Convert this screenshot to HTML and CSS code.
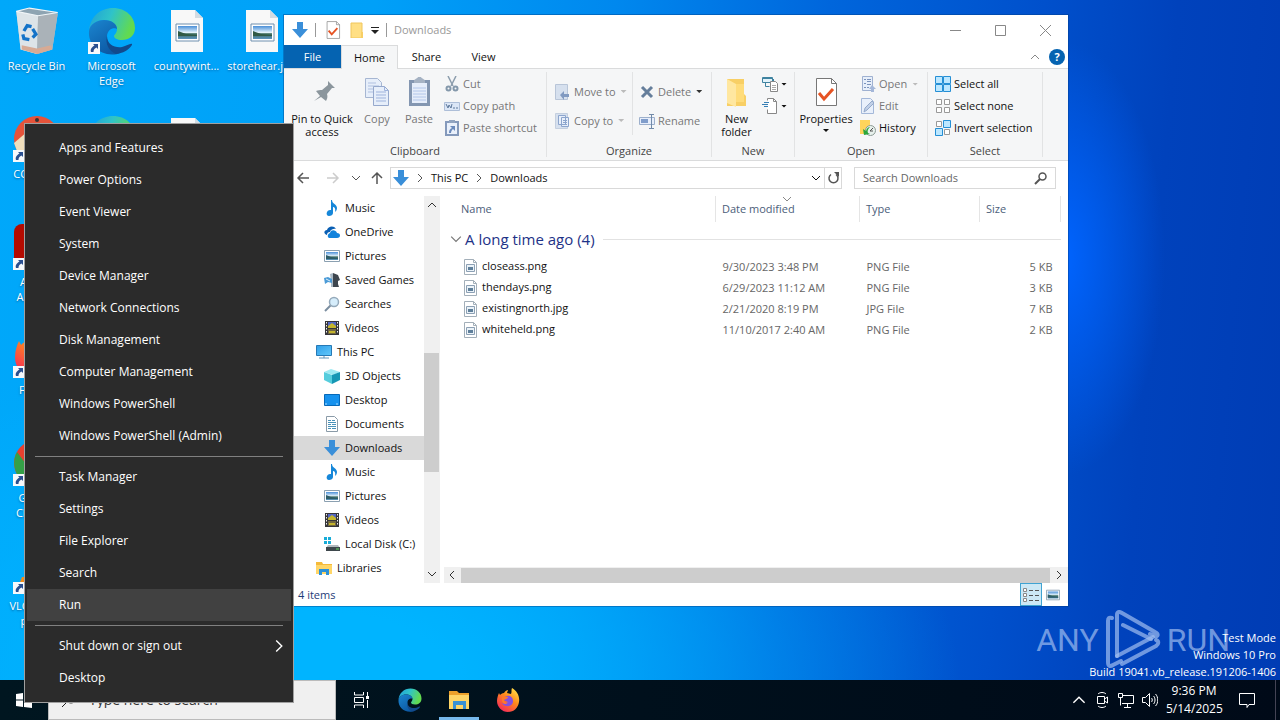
FILE: index.html
```html
<!DOCTYPE html>
<html lang="en">
<head>
  <meta charset="UTF-8" />
  <meta name="viewport" content="width=device-width, initial-scale=1.0"/>
  <title>Downloads</title>
  <link rel="stylesheet" href="styles.css">
</head>
<body>

<!-- Shared icons -->
<svg class="sprite" aria-hidden="true">
  <defs>
    <linearGradient id="edgeGreen" x1="0" y1="0" x2="1" y2="0.3"><stop offset="0" stop-color="#1f9fd8"/><stop offset="0.5" stop-color="#2fc3c9"/><stop offset="1" stop-color="#62da50"/></linearGradient>
    <linearGradient id="edgeBlue" x1="0" y1="0" x2="0.6" y2="1"><stop offset="0" stop-color="#1b86d0"/><stop offset="1" stop-color="#0c59a4"/></linearGradient>
    <linearGradient id="fox" x1="0.9" y1="0" x2="0.2" y2="1"><stop offset="0" stop-color="#ffe94a"/><stop offset="0.45" stop-color="#ff8a1c"/><stop offset="1" stop-color="#f5235e"/></linearGradient>
    <linearGradient id="sky" x1="0" y1="0" x2="0" y2="1"><stop offset="0" stop-color="#4a8fd8"/><stop offset="0.5" stop-color="#e3f2fb"/><stop offset="0.6" stop-color="#3b6b5a"/><stop offset="1" stop-color="#5b93c0"/></linearGradient>
    <linearGradient id="screen" x1="0" y1="0" x2="1" y2="1"><stop offset="0" stop-color="#2f9fe8"/><stop offset="1" stop-color="#62c8fb"/></linearGradient>
  </defs>

  <symbol id="down" viewBox="0 0 16 16"><path d="M5 0h6v7h5l-8 9-8-9h5z" fill="#3a8fd9"/></symbol>
  <symbol id="edge" viewBox="0 0 48 48">
    <path d="M1 24C2 10 12 1 25 1c13 0 22 9 22 20 0 8-6 12-13 12-5 0-8-2-8-4 0-1 3-3 3-7 0-5-6-9-13-9C8 13 2 18 1 24z" fill="url(#edgeGreen)"/>
    <path d="M1 24c1-7 8-11 15-11 8 0 13 4 13 9-2-2-10-1-10 8 0 7 5 14 13 16-2 1-5 1.500-8 1.500C10 47 0 37 1 24z" fill="url(#edgeBlue)"/>
    <path d="M19 29c0 9 8 12 15 11 5-1 8-4 10-3 1 1-5 9-16 10-7-3-11-10-9-18z" fill="#124a8c"/>
  </symbol>
  <symbol id="firefox" viewBox="0 0 24 24">
    <path d="M3 5l1 2c1-1 2-2 4-2 1-2 3-3 4-3l-1 3 4 1c1-2 0-4 1-6 5 3 8 8 7 14-1 6-5 10-11 10S1 19 1 13c0-3 1-6 2-8z" fill="url(#fox)"/>
    <path d="M8 10c3-4 9-2 9 3 0 6-8 7-11 2 2 1 4 0 5-2-3 0-4-2-3-3z" fill="#8350e0"/>
    <path d="M7 8l5 1c0 2-3 2-4 3 0 2 2 3 4 2-1 2-3 3-5 1-1-2-2-5 0-7z" fill="#ff7a2a"/>
  </symbol>
  <symbol id="picfile" viewBox="0 0 32 42">
    <path d="M0 0h24l8 8v34H0z" fill="#f8f8f8"/><path d="M24 0v8h8z" fill="#d2dbe2"/>
    <path d="M5 14h23v17H5z" fill="#fff" stroke="#6f8fae"/><path d="M7 16h19v13H7z" fill="url(#sky)"/><path d="M7 21l8 3 11 1v1H7z" fill="#315a46"/>
  </symbol>
  <symbol id="bin" viewBox="0 0 40 44">
    <path d="M1 4l38 2-5 33-14 4-15-4z" fill="#b9c5cc"/><path d="M1 4l20 4-1 35-15-4z" fill="#dde4e8"/><path d="M21 8l18-2-5 33-14 4z" fill="#aab2b8"/>
    <path d="M1 4l12-3 26 4-18 3z" fill="#8ea4b2" stroke="#f0f5f8"/><path d="M6 35l14 3 13-3 1 4-14 4-14-4z" fill="#d7aa94"/>
    <path d="M8 22l3-5 4 1M16 20l3 5-3 3M13 30l-5-1-1-4" fill="none" stroke="#1473c8" stroke-width="3"/>
  </symbol>
  <symbol id="shortcut" viewBox="0 0 12 12"><path d="M0 0h12v12H0z" fill="#f7f9fb"/><path d="M5 2h5v5L8.500 5.500C6 7 5.500 8 5.500 10H3C2 7 4 5 6.500 3.500z" fill="#2a4f8f"/></symbol>
  <symbol id="ccleaner" viewBox="0 0 48 48"><circle cx="24" cy="24" r="23" fill="#e5533a"/><circle cx="24" cy="24" r="12" fill="#f6f1e3"/><path d="M1 28l14-12 6 20H4z" fill="#f0dfbd"/><circle cx="24" cy="5" r="2" fill="#333"/></symbol>
  <symbol id="acrobat" viewBox="0 0 48 48"><rect x="1" y="1" width="46" height="46" rx="8" fill="#b30b00"/><path d="M12 35c8-4 14-16 11-23 2 12 8 18 14 18-8-1-17 0-25 5z" fill="none" stroke="#fff" stroke-width="3"/></symbol>
  <symbol id="chrome" viewBox="0 0 48 48"><circle cx="24" cy="24" r="23" fill="#e8402f"/><path d="M4 13a23 23 0 0 0 20 34l8-18H16z" fill="#34a047"/><path d="M47 20a23 23 0 0 1-23 27l10-24-6-8h18z" fill="#fbc116"/><circle cx="24" cy="24" r="10" fill="#4285f4" stroke="#fff" stroke-width="2"/></symbol>
  <symbol id="vlc" viewBox="0 0 48 48"><path d="M9 30h30l6 16H3z" fill="#f48b16"/><path d="M21 3h6l9 34H12z" fill="#f6f6f6"/><path d="M19 10h10l2 8H17zM15 25h18l2 8H13z" fill="#f48b16"/></symbol>

  <symbol id="music" viewBox="0 0 16 16"><path d="M8 0c0 4 5 4 5 8 0 2-1 3-2 4 1-4-1-5-2-5v6c0 2-2 3-4 3S2 14 3 12s3-2 4-2V0z" fill="#1687d9"/></symbol>
  <symbol id="onedrive" viewBox="0 0 16 16"><path d="M3 11C-1 10 0 6 3 6c1-4 7-5 9-1-4-1-6 2-6 3-2 0-3 1-3 3z" fill="#0a5fb4"/><path d="M6 14c-3 0-3-4 0-5 1-4 6-3 7 0 4 0 4 5 0 5z" fill="#1383dc"/></symbol>
  <symbol id="picture" viewBox="0 0 16 16"><path d="M.5 2.500h15v11H.5z" fill="#fff" stroke="#8ba0b1"/><path d="M2 4h12v8H2z" fill="url(#sky)"/><path d="M2 7l5 2 7 1v1H2z" fill="#2d5d69"/></symbol>
  <symbol id="games" viewBox="0 0 16 16"><path d="M9 1l5 2 2 5-2 1v3l1 3H8l1-6z" fill="#3e464e"/><path d="M6 2l3-1v14H7V9z" fill="#a9b8c4"/><path d="M0 6l4-1 4 2v4l-4-1-3 2z" fill="#4b9bd7"/><path d="M2 7l4 2" stroke="#dff1fc"/></symbol>
  <symbol id="search" viewBox="0 0 16 16"><path d="M1 15l6-6" stroke="#7b8ea0" stroke-width="2"/><circle cx="10" cy="6" r="4.500" fill="#d6edfb" stroke="#94a9ba" stroke-width="1.500"/></symbol>
  <symbol id="video" viewBox="0 0 16 16"><path d="M1 1h14v14H1z" fill="#36363a"/><path d="M4 2h8v6H4z" fill="#5367c4"/><path d="M4 9h8v5H4z" fill="#736841"/><path d="M4 6l4-3 4 3v2H4zM5 11h6v2H5z" fill="#c4b52d"/><path d="M2.500 2v12M13.500 2v12" stroke="#eee" stroke-dasharray="1.500 1.500"/></symbol>
  <symbol id="pc" viewBox="0 0 16 16"><path d="M.5 1.500h15v10H.5z" fill="url(#screen)" stroke="#2679b5"/><path d="M3 14h10M8 12v2" stroke="#6596ba"/></symbol>
  <symbol id="cube" viewBox="0 0 16 16"><path d="M0 4l7-3 9 3-7 3z" fill="#9eeaf2"/><path d="M0 4l8 3v9l-8-4z" fill="#55cddd"/><path d="M8 7l8-3v8l-8 4z" fill="#1697b4"/></symbol>
  <symbol id="desktop" viewBox="0 0 16 16"><path d="M.5 2.500h15v11H.5z" fill="#1692ee" stroke="#0769b8"/><path d="M1 12h14" stroke="#a6dbff" stroke-dasharray="2 9"/></symbol>
  <symbol id="document" viewBox="0 0 16 16"><path d="M2.500.5h8l3 3v12h-11z" fill="#fff" stroke="#8a9ba8"/><path d="M4 4.500h3M8 4.500h3M4 6.500h8M4 8.500h3M8 8.500h4M4 10.500h8M4 12.500h3M8 12.500h4" stroke="#4a92b9"/></symbol>
  <symbol id="disk" viewBox="0 0 16 16"><path d="M0 1h3v3H0zM4 1h3v3H4zM0 5h3v3H0zM4 5h3v3H4z" fill="#17acd8"/><path d="M4 9h10l2 3H2z" fill="#b2b9bd"/><path d="M2 11h14v4H2z" fill="#3e474c"/><path d="M12 13h3" stroke="#61e05d"/></symbol>
  <symbol id="library" viewBox="0 0 16 16"><path d="M0 2h6l1 2h9v10H0z" fill="#f5ba3a"/><path d="M0 5h16v9H0z" fill="#ffd668"/><path d="M3 15V9h10v6h-3v-3H6v3z" fill="#2c91d8"/></symbol>
  <symbol id="imgsmall" viewBox="0 0 13 16"><path d="M.5.500h9l3 3v12H.5z" fill="#fff" stroke="#a3afb9"/><path d="M9.500.500v3h3" fill="none" stroke="#a3afb9"/><path d="M2.500 5.500h8v7h-8z" fill="#eaf2f8" stroke="#8ca0b4"/><path d="M4 8h5v3H4z" fill="#5f7f9a"/></symbol>

  <symbol id="pin" viewBox="0 0 32 32"><path d="M8 25l6-5-4-5c2-1 4-1 6-1l6-5V5l7 7h-3l-5 6c1 3 0 5-1 7l-5-4z" fill="#8b969d"/></symbol>
  <symbol id="copy" viewBox="0 0 32 32"><path d="M4.500 2.500h12l4 4v15h-16z" fill="#e6eefa" stroke="#a6b6d2"/><path d="M7 7h8M7 10h11M7 13h11M7 16h11" stroke="#afc0e0"/><path d="M12.500 10.500h11l4 4v15h-15z" fill="#e6eefa" stroke="#96a9cd"/><path d="M23.500 10.500v4h4M15 16h10M15 19h10M15 22h10M15 25h10" fill="none" stroke="#9eb3dc"/></symbol>
  <symbol id="paste" viewBox="0 0 32 32"><path d="M6 4h21v26H6z" fill="#8396b1"/><path d="M9 7h15v20H9z" fill="#e5edfa"/><path d="M11 5c0-2 3-2 4-4h3c1 2 4 2 4 4v2H11z" fill="#a5b2c3"/><path d="M10 12h13M10 15h13M10 18h13M10 21h13M10 24h13" stroke="#b2c6ea"/></symbol>
  <symbol id="cut" viewBox="0 0 16 16"><path d="M4 0l5 10M12 0l-5 10" stroke="#8c9dad" stroke-width="1.500"/><circle cx="4.500" cy="12.500" r="2" fill="none" stroke="#8498ab" stroke-width="2"/><circle cx="11.500" cy="12.500" r="2" fill="none" stroke="#8498ab" stroke-width="2"/></symbol>
  <symbol id="path" viewBox="0 0 16 16"><path d="M.5 4.500h15v8H.5z" fill="#dbe6f6" stroke="#adbed8"/><path d="M2 6l2 4 1-3 2 3 1-4M9 10h2M12 10h2" fill="none" stroke="#5d789b"/></symbol>
  <symbol id="pasteshort" viewBox="0 0 16 16"><path d="M2 2h12v13H2z" fill="#e9f0fb" stroke="#8499bb" stroke-width="2"/><path d="M5 0h6v3H5z" fill="#91a4c0"/><path d="M5 13c0-3 1-4 3-5L6 6h5v5L9 9c-1 1-2 2-2 4z" fill="#6a8abc"/></symbol>
  <symbol id="moveto" viewBox="0 0 16 16"><path d="M.5.500h12v15H.5z" fill="#d6e0ee" stroke="#b8c5d8"/><path d="M5 11l4-4v3h5v3H9v3z" fill="#819ac1"/></symbol>
  <symbol id="copyto" viewBox="0 0 16 16"><path d="M.5.500h12v15H.5z" fill="#d6e0ee" stroke="#c4cfdf"/><path d="M3.500 2.500h7v9h-7zM6.500 4.500h7v9h-7z" fill="#e8effa" stroke="#8ca5cd"/><path d="M8 7.500h4M8 9.500h4M8 11.500h4" stroke="#8ca5cd"/></symbol>
  <symbol id="delete" viewBox="0 0 16 16"><path d="M3 3l10 10M13 3L3 13" stroke="#657e9b" stroke-width="3"/></symbol>
  <symbol id="rename" viewBox="0 0 16 16"><path d="M.5 4.500h15v7H.5z" fill="#e7eefb" stroke="#9db0cc"/><path d="M2 6h7v4H2z" fill="#809dcb"/><path d="M10 1.500h5M10 15.500h5M12.500 2v13" stroke="#718aa9"/></symbol>
  <symbol id="folder" viewBox="0 0 32 32"><path d="M6 3h17v15l2 2v10H6z" fill="#f8cf65"/><path d="M6 3l9 5v23l-9-4z" fill="#ffe7a0"/><path d="M15 8h8v18h-8z" fill="#ffdc7a"/></symbol>
  <symbol id="newitem" viewBox="0 0 16 16"><path d="M.5 1.500h10v5H.5z" fill="#e3f3fb" stroke="#3f83a0"/><path d="M1 2.500h10M3.500 6v4.500h4M11.500 3v3" fill="none" stroke="#3f83a0"/><path d="M8.500 5.500h5l2 2v8h-7z" fill="#fff" stroke="#888"/><path d="M10 9.500h4M10 11.500h4M10 13.500h4" stroke="#aaa"/></symbol>
  <symbol id="easy" viewBox="0 0 16 16"><path d="M5.500 2.500v-2h6l3 3v12h-9v-4" fill="#fff" stroke="#888"/><path d="M11.500.500v3h3" fill="none" stroke="#888"/><path d="M2 4.500h5M0 6.500h6M2 8.500h4" stroke="#377fb5"/></symbol>
  <symbol id="props" viewBox="0 0 32 32"><path d="M6.500 2.500h15l5 5v22h-20z" fill="#fff" stroke="#777"/><path d="M21.500 2.500v5h5" fill="none" stroke="#777"/><path d="M9 17l5 6 9-10" fill="none" stroke="#e65323" stroke-width="3"/></symbol>
  <symbol id="open" viewBox="0 0 16 16"><path d="M2.500.500h10v14h-10z" fill="#e7effa" stroke="#9fb1d1"/><path d="M4 3.500h2M4 7.500h2M4 11.500h2M7 3.500h4M7 5.500h4M7 8.500h4M7 11.500h2" stroke="#7b93bd"/><path d="M12 9l4 4h-2v3h-3v-3H9z" fill="#a4b7d9"/></symbol>
  <symbol id="edit" viewBox="0 0 16 16"><path d="M1.500.500h9l3 3v12h-12z" fill="#e9f0fb" stroke="#a4b8d9"/><path d="M4 14l1-4 7-7 2 2-7 7z" fill="#c1d0e8" stroke="#95aacb"/></symbol>
  <symbol id="history" viewBox="0 0 16 16"><path d="M0 0h10v14H0z" fill="#ffd45b"/><circle cx="10.500" cy="10.500" r="5" fill="#e8f1ed" stroke="#8b9a94"/><path d="M10 11l3-3M10 11h3" stroke="#555"/><path d="M4 15l-1-6 3 2c1-3 2-4 4-4-2 2-3 4-2 6l2 1z" fill="#2ca63c"/></symbol>
  <symbol id="selall" viewBox="0 0 16 16"><path d="M.5.500h7v7h-7zM8.500.500h7v7h-7zM.5 8.500h7v7h-7zM8.500 8.500h7v7h-7z" fill="#bce7ff" stroke="#258fd5"/></symbol>
  <symbol id="selnone" viewBox="0 0 16 16"><path d="M1.500 1.500h5v5h-5zM9.500 1.500h5v5h-5zM1.500 9.500h5v5h-5zM9.500 9.500h5v5h-5z" fill="#fff" stroke="#999"/></symbol>
  <symbol id="selinv" viewBox="0 0 16 16"><path d="M1.500 1.500h5v5h-5zM9.500 9.500h5v5h-5z" fill="#fff" stroke="#999"/><path d="M8.500.500h7v7h-7zM.5 8.500h7v7h-7z" fill="#bce7ff" stroke="#258fd5"/></symbol>
  <symbol id="chev-d" viewBox="0 0 10 10"><path d="M1 3l4 4 4-4" fill="none" stroke="currentColor"/></symbol>
  <symbol id="chev-u" viewBox="0 0 10 10"><path d="M1 7l4-4 4 4" fill="none" stroke="currentColor"/></symbol>
  <symbol id="chev-r" viewBox="0 0 10 10"><path d="M3 1l4 4-4 4" fill="none" stroke="currentColor"/></symbol>
  <symbol id="chev-l" viewBox="0 0 10 10"><path d="M7 1L3 5l4 4" fill="none" stroke="currentColor"/></symbol>
  <symbol id="arrow-l" viewBox="0 0 14 14"><path d="M13 7H2M7 2L2 7l5 5" fill="none" stroke="currentColor" stroke-width="1.500"/></symbol>
</svg>

<main class="desktop">
  <!-- Desktop icons -->
  <div class="icons">
    <div class="icon-col">
      <a href="#" class="desk-icon"><svg><use href="#bin"/></svg><span>Recycle Bin</span></a>
      <a href="#" class="desk-icon"><svg><use href="#ccleaner"/></svg><svg class="badge"><use href="#shortcut"/></svg><span>CCleaner</span></a>
      <a href="#" class="desk-icon"><svg><use href="#acrobat"/></svg><svg class="badge"><use href="#shortcut"/></svg><span>Adobe Acrobat</span></a>
      <a href="#" class="desk-icon"><svg><use href="#firefox"/></svg><svg class="badge"><use href="#shortcut"/></svg><span>Firefox</span></a>
      <a href="#" class="desk-icon"><svg><use href="#chrome"/></svg><svg class="badge"><use href="#shortcut"/></svg><span>Google Chrome</span></a>
      <a href="#" class="desk-icon"><svg><use href="#vlc"/></svg><svg class="badge"><use href="#shortcut"/></svg><span>VLC media player</span></a>
    </div>
    <div class="icon-col">
      <a href="#" class="desk-icon"><svg><use href="#edge"/></svg><svg class="badge"><use href="#shortcut"/></svg><span>Microsoft Edge</span></a>
      <a href="#" class="desk-icon" aria-label="Edge"><svg><use href="#edge"/></svg></a>
    </div>
    <div class="icon-col">
      <a href="#" class="desk-icon file"><svg><use href="#picfile"/></svg><span>countywint...</span></a>
      <a href="#" class="desk-icon file" aria-label="Image"><svg><use href="#picfile"/></svg></a>
    </div>
    <div class="icon-col">
      <a href="#" class="desk-icon file"><svg><use href="#picfile"/></svg><span>storehear.jpg</span></a>
    </div>
  </div>

  <div class="watermark">
    <span>ANY</span>
    <svg viewBox="0 0 56 60" fill="none" stroke="currentColor" stroke-width="4" stroke-linejoin="round" stroke-linecap="round">
      <path d="M7 8c-3-1-4 0-4 3v41c0 4 2 5 5 3l8-4"/>
      <path d="M18 15l28 14M12 46V5c0-3 2-4 5-2l33 19c4 2 3 5 0 4l-5-2"/>
      <path d="M12 46l36-19M17 54l34-18c3-2 3-5 0-6"/>
    </svg>
    <span>RUN</span>
  </div>
  <div class="build">
    <p>Test Mode</p>
    <p>Windows 10 Pro</p>
    <p>Build 19041.vb_release.191206-1406</p>
  </div>

  <!-- Explorer window -->
  <section class="window">
    <header class="titlebar">
      <svg class="i16"><use href="#down"/></svg>
      <i class="bar"></i>
      <button aria-label="Properties"><svg class="i20"><use href="#props"/></svg></button>
      <button aria-label="New folder"><svg class="i16" viewBox="0 0 16 16"><path d="M2 1h11v15H2z" fill="#ffdf84" stroke="#f0c65c"/><path d="M12 10h2v6h-2z" fill="#f8cf65"/></svg></button>
      <button class="qat" aria-label="Customize"><svg viewBox="0 0 8 8"><path d="M0 1.500h8" stroke="#222"/><path d="M0 4h8L4 8z" fill="#222"/></svg></button>
      <i class="bar"></i>
      <h1>Downloads</h1>
      <div class="controls">
        <button aria-label="Minimize"><svg viewBox="0 0 11 11"><path d="M0 5.500h11"/></svg></button>
        <button aria-label="Maximize"><svg viewBox="0 0 11 11"><path d="M.5.500h10v10H.5z"/></svg></button>
        <button aria-label="Close"><svg viewBox="0 0 11 11"><path d="M0 0l11 11M11 0L0 11"/></svg></button>
      </div>
    </header>

    <nav class="tabs">
      <button class="file-tab">File</button>
      <button class="active">Home</button>
      <button>Share</button>
      <button>View</button>
      <div class="tabs-end">
        <svg class="i10"><use href="#chev-u"/></svg>
        <button class="help">?</button>
      </div>
    </nav>

    <div class="ribbon">
      <div class="group g-clip">
        <div class="tools">
          <button class="big wide"><svg><use href="#pin"/></svg>Pin to Quick<br>access</button>
          <button class="big" disabled><svg><use href="#copy"/></svg>Copy</button>
          <button class="big" disabled><svg><use href="#paste"/></svg>Paste</button>
          <div class="list">
            <button disabled><svg><use href="#cut"/></svg>Cut</button>
            <button disabled><svg><use href="#path"/></svg>Copy path</button>
            <button disabled><svg><use href="#pasteshort"/></svg>Paste shortcut</button>
          </div>
        </div>
        <h2>Clipboard</h2>
      </div>
      <div class="group g-org">
        <div class="tools">
          <div class="list loose">
            <button disabled><svg><use href="#moveto"/></svg>Move to<i class="tri"></i></button>
            <button disabled><svg><use href="#copyto"/></svg>Copy to<i class="tri"></i></button>
          </div>
          <div class="list loose split">
            <button class="half"><svg><use href="#delete"/></svg>Delete<i class="tri"></i></button>
            <button disabled><svg><use href="#rename"/></svg>Rename</button>
          </div>
        </div>
        <h2>Organize</h2>
      </div>
      <div class="group g-new">
        <div class="tools">
          <button class="big"><svg><use href="#folder"/></svg>New<br>folder</button>
          <div class="list tight">
            <button aria-label="New item"><svg><use href="#newitem"/></svg><i class="tri"></i></button>
            <button aria-label="Easy access"><svg><use href="#easy"/></svg><i class="tri"></i></button>
          </div>
        </div>
        <h2>New</h2>
      </div>
      <div class="group g-open">
        <div class="tools">
          <button class="big mid"><svg><use href="#props"/></svg>Properties<i class="tri"></i></button>
          <div class="list">
            <button disabled><svg><use href="#open"/></svg>Open<i class="tri"></i></button>
            <button disabled><svg><use href="#edit"/></svg>Edit</button>
            <button><svg><use href="#history"/></svg>History</button>
          </div>
        </div>
        <h2>Open</h2>
      </div>
      <div class="group g-sel">
        <div class="tools">
          <div class="list">
            <button><svg><use href="#selall"/></svg>Select all</button>
            <button><svg><use href="#selnone"/></svg>Select none</button>
            <button><svg><use href="#selinv"/></svg>Invert selection</button>
          </div>
        </div>
        <h2>Select</h2>
      </div>
    </div>

    <div class="address">
      <button aria-label="Back"><svg class="i14"><use href="#arrow-l"/></svg></button>
      <button class="fwd" aria-label="Forward" disabled><svg class="i14"><use href="#arrow-l"/></svg></button>
      <button class="recent" aria-label="Recent"><svg class="i10"><use href="#chev-d"/></svg></button>
      <button class="up" aria-label="Up"><svg class="i14"><use href="#arrow-l"/></svg></button>
      <div class="crumbs">
        <svg class="i16"><use href="#down"/></svg>
        <svg class="i10"><use href="#chev-r"/></svg>
        <a href="#">This PC</a>
        <svg class="i10"><use href="#chev-r"/></svg>
        <a href="#">Downloads</a>
        <button class="drop" aria-label="Previous locations"><svg class="i10"><use href="#chev-d"/></svg></button>
        <button class="refresh" aria-label="Refresh"><svg class="i14" viewBox="0 0 14 14"><path d="M5 3.500a4.500 4.500 0 1 0 5 0" fill="none" stroke="currentColor" stroke-width="1.500"/><path d="M8 1h5v5z" fill="currentColor"/></svg></button>
      </div>
      <div class="search">
        <input type="text" placeholder="Search Downloads" aria-label="Search Downloads" />
        <svg class="i14" viewBox="0 0 14 14"><circle cx="8.500" cy="5.500" r="3.500" fill="none" stroke="#555" stroke-width="1.500"/><path d="M6 8l-5 5" stroke="#555" stroke-width="2"/></svg>
      </div>
    </div>

    <div class="body">
      <nav class="tree">
        <a href="#"><svg><use href="#music"/></svg>Music</a>
        <a href="#"><svg><use href="#onedrive"/></svg>OneDrive</a>
        <a href="#"><svg><use href="#picture"/></svg>Pictures</a>
        <a href="#"><svg><use href="#games"/></svg>Saved Games</a>
        <a href="#"><svg><use href="#search"/></svg>Searches</a>
        <a href="#"><svg><use href="#video"/></svg>Videos</a>
        <a href="#" class="root"><svg><use href="#pc"/></svg>This PC</a>
        <a href="#"><svg><use href="#cube"/></svg>3D Objects</a>
        <a href="#"><svg><use href="#desktop"/></svg>Desktop</a>
        <a href="#"><svg><use href="#document"/></svg>Documents</a>
        <a href="#" class="selected"><svg><use href="#down"/></svg>Downloads</a>
        <a href="#"><svg><use href="#music"/></svg>Music</a>
        <a href="#"><svg><use href="#picture"/></svg>Pictures</a>
        <a href="#"><svg><use href="#video"/></svg>Videos</a>
        <a href="#"><svg><use href="#disk"/></svg>Local Disk (C:)</a>
        <a href="#" class="root"><svg><use href="#library"/></svg>Libraries</a>
      </nav>
      <div class="vscroll">
        <svg class="i10"><use href="#chev-u"/></svg>
        <div class="track"><div class="thumb"></div></div>
        <svg class="i10"><use href="#chev-d"/></svg>
      </div>
      <div class="files">
        <table>
          <colgroup><col><col class="c-date"><col class="c-type"><col class="c-size"></colgroup>
          <thead>
            <tr><th>Name</th><th class="sorted">Date modified<svg class="i10"><use href="#chev-d"/></svg></th><th>Type</th><th>Size</th></tr>
          </thead>
          <tbody>
            <tr class="group-row"><td colspan="4"><div><svg class="i12"><use href="#chev-d"/></svg>A long time ago (4)<hr></div></td></tr>
            <tr><td><svg><use href="#imgsmall"/></svg>closeass.png</td><td>9/30/2023 3:48 PM</td><td>PNG File</td><td>5 KB</td></tr>
            <tr><td><svg><use href="#imgsmall"/></svg>thendays.png</td><td>6/29/2023 11:12 AM</td><td>PNG File</td><td>3 KB</td></tr>
            <tr><td><svg><use href="#imgsmall"/></svg>existingnorth.jpg</td><td>2/21/2020 8:19 PM</td><td>JPG File</td><td>7 KB</td></tr>
            <tr><td><svg><use href="#imgsmall"/></svg>whiteheld.png</td><td>11/10/2017 2:40 AM</td><td>PNG File</td><td>2 KB</td></tr>
          </tbody>
        </table>
        <div class="hscroll">
          <svg class="i10"><use href="#chev-l"/></svg>
          <div class="thumb"></div>
          <svg class="i10"><use href="#chev-r"/></svg>
        </div>
      </div>
    </div>

    <footer class="status">
      <span>4 items</span>
      <button class="on" aria-label="Details"><svg class="i16" viewBox="0 0 16 16"><path d="M.5 1.500h3v3h-3zM.5 6.500h3v3h-3zM.5 11.500h3v3h-3z" fill="#fff" stroke="#888"/><path d="M6 3.500h4M12 3.500h4M6 8.500h4M12 8.500h4M6 13.500h4M12 13.500h4" stroke="#555"/></svg></button>
      <button aria-label="Large icons"><svg class="i14"><use href="#picture"/></svg></button>
    </footer>
  </section>
</main>

<!-- Taskbar -->
<footer class="taskbar">
  <button class="start" aria-label="Start"><svg class="i16" viewBox="0 0 16 16"><path d="M0 2l7-1v6.500H0zM8 1l8-1v7.500H8zM0 8.500h7V15l-7-1zM8 8.500h8V16l-8-1z" fill="#fff"/></svg></button>
  <div class="task-search">
    <svg class="i16" viewBox="0 0 16 16"><circle cx="10" cy="6" r="5" fill="none" stroke="#222"/><path d="M6 10l-5 5" stroke="#222"/></svg>
    <input type="text" placeholder="Type here to search" aria-label="Type here to search" />
  </div>
  <button aria-label="Task View"><svg class="i16" viewBox="0 0 16 16"><path d="M1.500 0v3h9V0M1.500 16v-3h9v3M1.500 5.500h9v5h-9zM14.500 0v4M14.500 8v8" fill="none" stroke="#fff"/><path d="M13 4h3v3h-3z" fill="#fff"/></svg></button>
  <button aria-label="Edge"><svg class="i24"><use href="#edge"/></svg></button>
  <button class="running" aria-label="File Explorer"><svg class="i24" viewBox="0 0 24 24"><path d="M2 3h8l2 2h10v16H2z" fill="#eda12b"/><path d="M2 7h20v14H2z" fill="#ffd566"/><path d="M6 21v-8h13v8h-3v-4H9v4z" fill="#3a91d3"/></svg></button>
  <button aria-label="Firefox"><svg class="i24"><use href="#firefox"/></svg></button>
  <div class="tray">
    <svg class="i14"><use href="#chev-u"/></svg>
    <svg class="i16" viewBox="0 0 16 16"><path d="M3.500 4.500h7v7h-7zM10.500 7l3-2v6l-3-2M4 2c2-2 6-2 8 0M4 14c2 2 6 2 8 0" fill="none" stroke="#fff"/></svg>
    <svg class="i16" viewBox="0 0 16 16"><path d="M4.500 3.500h11v8H4M9.500 12v3M6 15.500h7M.5 1.500h4v4h-4zM2.500 5.500v8" fill="none" stroke="#fff"/></svg>
    <svg class="i16" viewBox="0 0 16 16"><path d="M.5 5.500h3l4-4v13l-4-4h-3zM9.500 6c1 1 1 3 0 4M11.500 4c2 2 2 6 0 8M13.500 2c3 3 3 9 0 12" fill="none" stroke="#fff"/></svg>
    <time>9:36 PM<br>5/14/2025</time>
    <button aria-label="Notifications"><svg class="i16" viewBox="0 0 16 16"><path d="M.5 1.500h15v11H10l-2 3v-3H.5z" fill="none" stroke="#fff"/></svg></button>
  </div>
</footer>

<!-- Start button context menu -->
<div class="menu">
  <button>Apps and Features</button>
  <button>Power Options</button>
  <button>Event Viewer</button>
  <button>System</button>
  <button>Device Manager</button>
  <button>Network Connections</button>
  <button>Disk Management</button>
  <button>Computer Management</button>
  <button>Windows PowerShell</button>
  <button>Windows PowerShell (Admin)</button>
  <hr>
  <button>Task Manager</button>
  <button>Settings</button>
  <button>File Explorer</button>
  <button>Search</button>
  <button class="hover">Run</button>
  <hr>
  <button>Shut down or sign out<svg class="i14"><use href="#chev-r"/></svg></button>
  <button>Desktop</button>
</div>

</body>
</html>
```
FILE: styles.css
```css
* {
  box-sizing: border-box;
}

body {
  margin: 0;
  height: 100vh;
  display: flex;
  flex-direction: column;
  overflow: hidden;
  position: relative;
  font-family: "Open Sans", "Noto Sans", sans-serif;
  font-size: 12px;
  line-height: 16px;
  color: #111;
}

button, input {
  font: inherit;
  color: inherit;
  background: none;
  border: none;
  padding: 0;
  margin: 0;
}

a {
  color: inherit;
  text-decoration: none;
}

h1, h2, p {
  margin: 0;
  font-size: inherit;
  font-weight: normal;
}

svg {
  flex: none;
  display: block;
}

.sprite {
  position: absolute;
  width: 0;
  height: 0;
}

.i10 { width: 10px; height: 10px; }
.i12 { width: 12px; height: 12px; }
.i14 { width: 14px; height: 14px; }
.i16 { width: 16px; height: 16px; }
.i20 { width: 20px; height: 20px; }
.i24 { width: 24px; height: 24px; }

/* Desktop */
.desktop {
  flex: 1;
  min-height: 0;
  position: relative;
  overflow: hidden;
  font-size: 11px;
  background:
    radial-gradient(ellipse 8% 32% at 83% 38%, #0064ff, transparent),
    radial-gradient(ellipse 50% 50% at 25% 100%, #00b4ff 20%, transparent),
    linear-gradient(95deg, #00a8fa 0%, #00a0f8 28%, #0088ee 46%, #0066dc 62%, #0050cc 78%, #0042bc 88%, #003cb4 100%);
}

.icons {
  display: flex;
  padding-top: 7px;
}

.icon-col {
  width: 75px;
  display: flex;
  flex-direction: column;
}

.desk-icon {
  height: 108px;
  padding: 0 4px 0 2px;
  display: flex;
  flex-direction: column;
  align-items: center;
  position: relative;
  color: #fff;
  line-height: 15px;
  text-align: center;
  text-shadow: 0 1px 2px rgba(0, 40, 90, 0.5);
}

.desk-icon svg {
  width: 48px;
  height: 48px;
  margin-bottom: 3px;
}

.desk-icon.file svg {
  height: 42px;
  margin: 3px 0 6px;
}

.desk-icon .badge {
  position: absolute;
  left: 13px;
  top: 35px;
  width: 12px;
  height: 12px;
}

.watermark {
  position: absolute;
  right: 50px;
  bottom: 10px;
  display: flex;
  align-items: center;
  gap: 6px;
  font-family: Roboto, "Liberation Sans", sans-serif;
  font-size: 32px;
  line-height: 60px;
  color: rgba(160, 190, 240, 0.7);
}

.watermark svg {
  width: 56px;
  height: 60px;
}

.build {
  position: absolute;
  right: 4px;
  bottom: 0;
  color: #fff;
  line-height: 17px;
  text-align: right;
}

/* Explorer window */
.window {
  position: absolute;
  left: 284px;
  right: 212px;
  top: 15px;
  bottom: 74px;
  background: #fff;
  display: flex;
  flex-direction: column;
  box-shadow: 0 0 0 1px rgba(0, 60, 130, 0.4);
}

.titlebar {
  height: 30px;
  padding-left: 8px;
  display: flex;
  align-items: center;
  gap: 6px;
}

.titlebar .bar {
  width: 1px;
  height: 14px;
  margin: 0 1px;
  background: #999;
}

.titlebar h1 {
  color: #999;
}

.qat svg {
  width: 8px;
  height: 8px;
}

.controls {
  margin-left: auto;
  display: flex;
}

.controls button {
  width: 45px;
  height: 29px;
  display: grid;
  place-items: center;
}

.controls svg {
  width: 11px;
  height: 11px;
  fill: none;
  stroke: #888;
}

.tabs {
  height: 24px;
  display: flex;
  border-bottom: 1px solid #dadbdc;
}

.tabs > button {
  width: 57px;
  height: 24px;
}

.tabs .file-tab {
  height: 23px;
  background: #0563b1;
  color: #fff;
}

.tabs .active {
  background: #f5f6f7;
  border: 1px solid #dadbdc;
  border-bottom: none;
}

.tabs-end {
  margin-left: auto;
  padding-right: 3px;
  display: flex;
  align-items: center;
  gap: 9px;
  color: #888;
}

.help {
  width: 16px;
  height: 16px;
  border-radius: 50%;
  background: #0563b1;
  color: #fff;
  font-weight: bold;
}

.ribbon {
  height: 92px;
  display: flex;
  background: #f5f6f7;
  border-bottom: 1px solid #dadbdc;
}

.group {
  margin: 3px 0;
  border-right: 1px solid #e2e3e4;
  display: flex;
  flex-direction: column;
}

.group h2 {
  line-height: 12px;
  text-align: center;
  color: #444;
}

.g-clip { width: 263px; }
.g-org { width: 165px; }
.g-new { width: 83px; }
.g-open { width: 133px; }
.g-sel { width: 115px; }

.tools {
  flex: 1;
  display: flex;
  align-items: flex-start;
  white-space: nowrap;
}

.big {
  width: 42px;
  padding-top: 4px;
  display: block;
  line-height: 13px;
  text-align: center;
}

.big svg {
  width: 32px;
  height: 32px;
  margin: 0 auto 4px;
}

.big .tri {
  display: block;
  margin: 4px auto;
}

.big.wide {
  width: 72px;
  padding-left: 4px;
}

.big.mid { width: 62px; }
.g-new .big { width: 49px; }

.list {
  padding: 1px 0 0 4px;
}

.list.loose {
  width: 85px;
  padding: 5px 0 0 8px;
}

.list.split {
  width: auto;
  padding-left: 6px;
  border-left: 1px solid #e2e3e4;
}

.list.tight {
  padding-left: 1px;
}

.g-open .list {
  padding-left: 3px;
}

.g-sel .list {
  padding-left: 7px;
}

.list button {
  height: 22px;
  display: flex;
  align-items: center;
  gap: 3px;
}

.list.loose button {
  height: 29px;
}

.list svg {
  width: 16px;
  height: 16px;
}

.tri {
  width: 6px;
  height: 3px;
  margin-left: 2px;
  background: currentColor;
  clip-path: polygon(0 0, 100% 0, 50% 100%);
}

.list.tight .tri {
  margin-left: 0;
}

.ribbon button:disabled,
.half {
  color: #777;
}

.ribbon button:disabled .tri {
  background: #bbb;
}

.half .tri {
  background: #333;
}

.address {
  height: 35px;
  padding: 0 12px 2px;
  display: flex;
  align-items: center;
  color: #555;
}

.address .fwd {
  margin: 0 11px 0 16px;
  color: #ccc;
  transform: scaleX(-1);
}

.address .up {
  margin: 0 6px 0 9px;
}

.up svg {
  transform: rotate(90deg);
}

.crumbs {
  flex: 1;
  height: 22px;
  padding-left: 2px;
  display: flex;
  align-items: center;
  gap: 6px;
  border: 1px solid #d9d9d9;
  color: #111;
}

.crumbs > svg {
  color: #555;
}

.crumbs .drop {
  margin-left: auto;
}

.refresh {
  height: 20px;
  padding: 0 1px;
  border-left: 1px solid #d9d9d9;
  color: #555;
  margin-left: -3px;
}

.search {
  width: 202px;
  height: 22px;
  margin-left: 12px;
  padding: 0 7px 0 8px;
  display: flex;
  align-items: center;
  border: 1px solid #d9d9d9;
}

.search input {
  flex: 1;
  min-width: 0;
}

.search input::placeholder {
  color: #666;
}

.body {
  flex: 1;
  min-height: 0;
  display: flex;
}

.tree {
  width: 140px;
  overflow: hidden;
  white-space: nowrap;
}

.tree a {
  height: 24px;
  padding-left: 40px;
  display: flex;
  align-items: center;
  gap: 5px;
}

.tree a.root {
  padding-left: 32px;
}

.tree svg {
  width: 16px;
  height: 16px;
}

.tree .selected {
  background: #d9d9d9;
}

.vscroll {
  width: 16px;
  padding: 4px 0;
  display: flex;
  flex-direction: column;
  align-items: center;
  background: #f0f0f0;
  color: #333;
}

.track {
  flex: 1;
  width: 100%;
  padding: 143px 1px 97px 0;
  display: flex;
}

.thumb {
  flex: 1;
  background: #cdcdcd;
}

.files {
  flex: 1;
  margin-left: 4px;
  display: flex;
  flex-direction: column;
}

table {
  margin-right: 7px;
  table-layout: fixed;
  border-collapse: collapse;
  color: #666;
}

.c-date { width: 144px; }
.c-type { width: 120px; }
.c-size { width: 81px; }

th {
  height: 26px;
  padding: 0 6px;
  position: relative;
  border-right: 1px solid #e5e5e5;
  color: #4c607a;
  font-weight: normal;
  text-align: left;
}

th:first-child {
  padding-left: 17px;
}

.sorted svg {
  position: absolute;
  left: 66px;
  top: -2px;
  color: #888;
}

td {
  height: 21px;
  padding: 0 8px 0 7px;
}

td:first-child {
  padding-left: 20px;
  color: #111;
}

td:last-child {
  text-align: right;
}

td svg {
  width: 13px;
  height: 16px;
  display: inline-block;
  vertical-align: middle;
  margin-right: 5px;
}

.group-row td:first-child {
  height: 34px;
  padding: 0 0 0 6px;
  font-size: 15px;
  color: #1e3287;
}

.group-row div {
  display: flex;
  align-items: center;
}

.group-row svg {
  width: 12px;
  height: 12px;
  margin-right: 3px;
  color: #777;
}

.group-row hr {
  flex: 1;
  margin: 0 0 0 8px;
  border: none;
  border-top: 1px solid #e2e2e2;
}

.hscroll {
  height: 16px;
  margin-top: auto;
  padding: 0 4px 0 3px;
  display: flex;
  align-items: center;
  gap: 4px;
  background: #f0f0f0;
  color: #333;
}

.hscroll .thumb {
  height: 15px;
}

.status {
  height: 23px;
  padding: 0 4px 0 14px;
  display: flex;
  align-items: center;
  color: #1e3c78;
}

.status span {
  margin-right: auto;
}

.status button {
  width: 22px;
  height: 23px;
  display: grid;
  place-items: center;
}

.status .on {
  background: #cce8f5;
  border: 1px solid #3fa3d2;
}

/* Taskbar */
.taskbar {
  height: 40px;
  display: flex;
  background: linear-gradient(90deg, #001620, #000a18);
  color: #fff;
}

.taskbar button {
  width: 49px;
  display: grid;
  place-items: center;
}

.taskbar .start {
  width: 48px;
}

.taskbar .running {
  background: linear-gradient(#76b9ed, #76b9ed) center bottom / 40px 3px no-repeat;
}

.task-search {
  width: 288px;
  padding: 0 12px;
  display: flex;
  align-items: center;
  gap: 12px;
  background: #f0f0f0;
  border: 1px solid #bbb;
  font-size: 14px;
}

.task-search input {
  flex: 1;
  min-width: 0;
}

.task-search input::placeholder {
  color: #333;
}

.tray {
  margin-left: auto;
  margin-right: 4px;
  padding-right: 11px;
  display: flex;
  align-items: center;
  gap: 8px;
  border-right: 1px solid #445;
}

.tray button {
  width: 34px;
}

.tray time {
  width: 56px;
  line-height: 18px;
  text-align: center;
}

/* Context menu */
.menu {
  position: absolute;
  left: 24px;
  bottom: 17px;
  width: 270px;
  padding: 8px 2px;
  display: flex;
  flex-direction: column;
  background: #2b2b2b;
  border: 1px solid #a0a0a0;
  color: #fff;
}

.menu button {
  height: 32px;
  padding: 0 5px 0 32px;
  display: flex;
  justify-content: space-between;
  align-items: center;
  text-align: left;
}

.menu button.hover,
.menu button:hover {
  background: #414141;
}

.menu hr {
  height: 1px;
  margin: 4px 8px;
  border: none;
  background: #808080;
}
```
